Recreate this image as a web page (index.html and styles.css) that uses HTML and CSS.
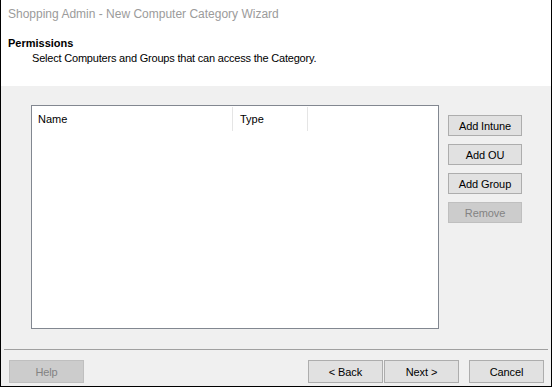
FILE: index.html
```html
<!DOCTYPE html>
<html lang="en">
<head>
    <meta charset="UTF-8">
    <title>Shopping Admin - New Computer Category Wizard</title>
    <link rel="stylesheet" href="styles.css">
</head>
<body>
    <div class="window">
        <!-- Wizard header -->
        <div class="header">
            <div class="title">Shopping Admin - New Computer Category Wizard</div>
            <div class="page-title">Permissions</div>
            <div class="page-desc">Select Computers and Groups that can access the Category.</div>
        </div>

        <div class="body">
            <div class="content">
                <div class="list">
                    <div class="list-head">
                        <div class="col col-name">Name</div>
                        <div class="col col-type">Type</div>
                    </div>
                </div>
                <div class="side-buttons">
                    <button class="btn">Add Intune</button>
                    <button class="btn">Add OU</button>
                    <button class="btn">Add Group</button>
                    <button class="btn" disabled>Remove</button>
                </div>
            </div>

            <div class="separator"></div>

            <div class="footer">
                <button class="btn btn-wide" disabled>Help</button>
                <div class="footer-right">
                    <button class="btn btn-wide">&lt; Back</button>
                    <button class="btn btn-wide">Next &gt;</button>
                    <button class="btn btn-wide btn-cancel">Cancel</button>
                </div>
            </div>
        </div>
    </div>
</body>
</html>
```

FILE: styles.css
```css
body {
    margin: 0;
    font-family: "Liberation Sans", Arial, sans-serif;
    font-size: 11px;
    color: #000;
    background: #fff;
}
.window {
    width: 552px;
    height: 387px;
    box-sizing: border-box;
    border-left: 1px solid #000;
    border-right: 1px solid #000;
    border-bottom: 1px solid #000;
    display: flex;
    flex-direction: column;
}
.header {
    height: 86px;
    background: #fff;
    padding-left: 7px;
}
.title {
    font-size: 12px;
    color: #9b9b9b;
    padding-top: 7px;
    line-height: 15px;
}
.page-title {
    font-weight: bold;
    margin-top: 15px;
    line-height: 13px;
}
.page-desc {
    padding-left: 24px;
    margin-top: 2px;
    line-height: 13px;
    letter-spacing: -0.2px;
}
.body {
    flex: 1;
    background: #f0f0f0;
    display: flex;
    flex-direction: column;
}
.content {
    display: flex;
    padding: 19px 0 0 30px;
    gap: 9px;
}
.list {
    width: 408px;
    height: 224px;
    box-sizing: border-box;
    border: 1px solid #828790;
    background: #fff;
}
.list-head {
    display: flex;
    height: 24px;
    margin-top: 1px;
}
.col {
    line-height: 24px;
    padding-left: 6px;
    border-right: 1px solid #e5e5e5;
    box-sizing: border-box;
}
.col-name {
    width: 201px;
}
.col-type {
    width: 75px;
    padding-left: 7px;
}
.side-buttons {
    display: flex;
    flex-direction: column;
    gap: 8px;
    padding-top: 10px;
}
.btn {
    width: 74px;
    height: 21px;
    padding: 0;
    font-family: "Liberation Sans", Arial, sans-serif;
    font-size: 11px;
    letter-spacing: -0.1px;
    color: #000;
    background: #e1e1e1;
    border: 1px solid #adadad;
}
.btn:disabled {
    background: #cccccc;
    border-color: #bfbfbf;
    color: #838383;
}
.separator {
    margin: 20px 3px 0 3px;
    border-top: 1px solid #a0a0a0;
}
.footer {
    display: flex;
    justify-content: space-between;
    padding: 10px 7px 0 8px;
}
.footer-right {
    display: flex;
    gap: 1px;
}
.btn-wide {
    width: 75px;
    height: 23px;
}
.btn-cancel {
    margin-left: 9px;
}
```
